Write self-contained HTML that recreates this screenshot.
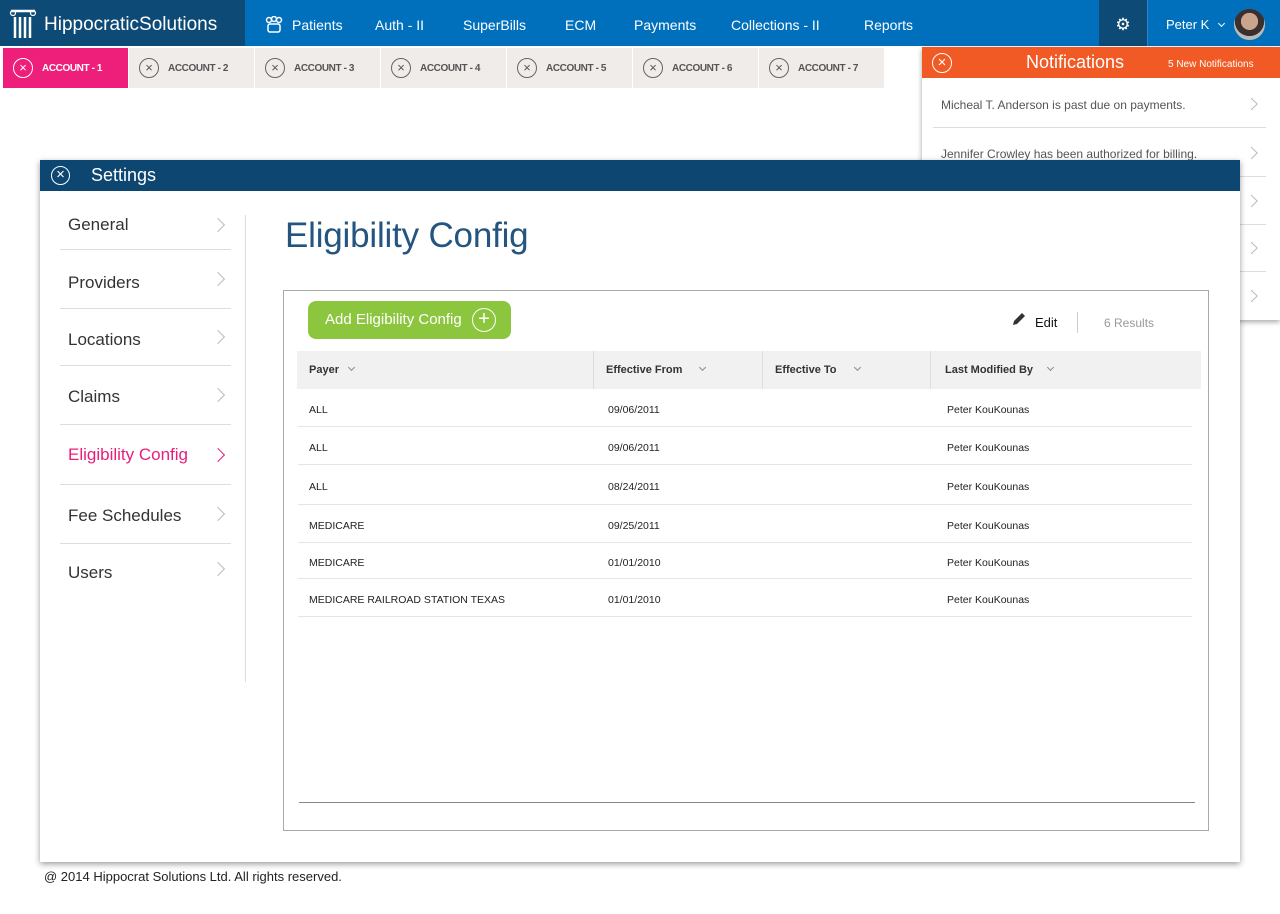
<!DOCTYPE html>
<html><head><meta charset="utf-8"><style>
*{box-sizing:border-box;margin:0;padding:0}
body{width:1280px;height:914px;background:#fff;font-family:"Liberation Sans",Arial,sans-serif;position:relative;overflow:hidden;color:#222}
.abs{position:absolute}
.nav{left:0;top:0;width:1280px;height:46px;background:#0070bd}
.logo{left:0;top:0;width:245px;height:46px;background:#0d4a75;color:#fff;font-size:19px;line-height:50px;padding-left:44px}
.nl{top:0;line-height:50px;color:#fff;font-size:14px}
.tab{top:48px;height:40px;width:125px;background:#efecea;color:#555;font-size:10px;line-height:41px;padding-left:39px;font-weight:bold;letter-spacing:-.4px}
.tab .x{position:absolute;left:10px;top:10px;width:20px;height:20px;border:1px solid #666;border-radius:50%;font-size:13px;line-height:17px;text-align:center;padding:0;font-weight:normal;letter-spacing:0}
.notif{left:922px;top:47px;width:358px;height:273px;background:#fff;box-shadow:0 2px 5px rgba(0,0,0,.35)}
.nh{height:31px;background:#f15a24;color:#fff}
.nrow{position:absolute;left:11px;width:333px;height:48px;border-bottom:1px solid #ddd;font-size:12px;color:#555;line-height:50px;padding-left:8px}
.chev{position:absolute;right:10px;top:50%;width:9px;height:9px;border-right:1px solid #bbb;border-top:1px solid #bbb;transform:translateY(-50%) rotate(45deg)}
.modal{left:40px;top:160px;width:1200px;height:702px;background:#fff;box-shadow:0 2px 6px rgba(0,0,0,.4)}
.mh{height:31px;background:#0d4670;color:#fff;font-size:18px;line-height:31px;padding-left:51px}
.si{position:absolute;left:20px;width:171px;font-size:17px;color:#333;padding-left:8px;border-bottom:1px solid #ddd}
.si .chev{right:8px;width:10px;height:10px}
.tbl{left:243px;top:130px;width:926px;height:541px;border:1px solid #aaa}
.th{position:absolute;top:60px;height:38px;background:#f1f1f1;font-size:11px;font-weight:bold;line-height:38px;padding-left:12px;color:#333}
.dd{display:inline-block;width:5px;height:5px;border-right:1px solid #888;border-bottom:1px solid #888;transform:rotate(45deg);margin-left:10px;position:relative;top:-3px}
.row{position:absolute;left:14px;width:894px;border-bottom:1px solid #e5e5e5;font-size:10.5px;color:#222}
.row span{position:absolute;top:50%;transform:translateY(-35%)}
</style></head><body>
<div class="abs nav"></div>
<div class="abs logo">Hippocratic<b style="font-weight:normal">Solutions</b>
<svg class="abs" style="left:9px;top:8px" width="28" height="32" viewBox="0 0 28 32"><path d="M2 3h24" stroke="#fff" stroke-width="2.5"/><circle cx="4" cy="5" r="2.5" fill="none" stroke="#fff" stroke-width="1.2"/><circle cx="24" cy="5" r="2.5" fill="none" stroke="#fff" stroke-width="1.2"/><path d="M6 9v21M11 9v21M16 9v21M21 9v21" stroke="#fff" stroke-width="2.5"/></svg></div>
<svg class="abs" style="left:265px;top:16px" width="18" height="17" viewBox="0 0 18 17"><g fill="none" stroke="#fff" stroke-width="1.5"><circle cx="4" cy="4" r="2.5"/><circle cx="9" cy="3" r="2.5"/><circle cx="14" cy="4" r="2.5"/><rect x="3" y="8" width="12" height="8" rx="2"/></g></svg>
<div class="abs nl" style="left:292px">Patients</div>
<div class="abs nl" style="left:375px">Auth - II</div>
<div class="abs nl" style="left:463px">SuperBills</div>
<div class="abs nl" style="left:565px">ECM</div>
<div class="abs nl" style="left:634px">Payments</div>
<div class="abs nl" style="left:731px">Collections - II</div>
<div class="abs nl" style="left:864px">Reports</div>
<div class="abs" style="left:1099px;top:0;width:48px;height:46px;background:#0d4a75;color:#fff;text-align:center;line-height:50px;font-size:17px">⚙</div>
<div class="abs" style="left:1147px;top:0;width:1px;height:46px;background:#2a84c8"></div>
<div class="abs nl" style="left:1166px;font-size:13px;line-height:50px">Peter K <span style="display:inline-block;width:5px;height:5px;border-right:1.3px solid #fff;border-bottom:1.3px solid #fff;transform:rotate(45deg);margin-left:6px;position:relative;top:-3px"></span></div>
<div class="abs" style="left:1234px;top:9px;width:31px;height:31px;border-radius:50%;background:radial-gradient(circle at 50% 40%,#c9a58d 0 35%,#3a3030 36% 60%,#b8bcb6 61%)"></div>

<div class="abs tab" style="left:3px;background:#ee1f7a;color:#fff"><span class="x" style="border-color:#fff;color:#fff">×</span>ACCOUNT - 1</div>
<div class="abs tab" style="left:129px"><span class="x">×</span>ACCOUNT - 2</div>
<div class="abs tab" style="left:255px"><span class="x">×</span>ACCOUNT - 3</div>
<div class="abs tab" style="left:381px"><span class="x">×</span>ACCOUNT - 4</div>
<div class="abs tab" style="left:507px"><span class="x">×</span>ACCOUNT - 5</div>
<div class="abs tab" style="left:633px"><span class="x">×</span>ACCOUNT - 6</div>
<div class="abs tab" style="left:759px"><span class="x">×</span>ACCOUNT - 7</div>

<div class="abs notif">
<div class="nh"><span class="abs" style="left:10px;top:6px;width:20px;height:20px;border:1.3px solid #fff;border-radius:50%;text-align:center;line-height:17px;font-size:15px">×</span>
<span class="abs" style="left:104px;top:5px;font-size:18px">Notifications</span>
<span class="abs" style="left:246px;top:12px;font-size:10px">5 New Notifications</span></div>
<div class="nrow" style="top:33px">Micheal T. Anderson is past due on payments.<i class="chev"></i></div>
<div class="nrow" style="top:82px">Jennifer Crowley has been authorized for billing.<i class="chev"></i></div>
<div class="nrow" style="top:130px"><i class="chev"></i></div>
<div class="nrow" style="top:177px"><i class="chev"></i></div>
<div class="nrow" style="top:225px;border:none"><i class="chev"></i></div>
</div>

<div class="abs modal">
<div class="mh"><span class="abs" style="left:11px;top:6px;width:19px;height:19px;border:1.3px solid #fff;border-radius:50%;text-align:center;line-height:16px;font-size:15px;padding:0">×</span>Settings</div>
<div class="si" style="top:40px;height:50px;line-height:50px">General<i class="chev"></i></div>
<div class="si" style="top:90px;height:59px;line-height:66px">Providers<i class="chev"></i></div>
<div class="si" style="top:149px;height:57px;line-height:62px">Locations<i class="chev"></i></div>
<div class="si" style="top:206px;height:59px;line-height:62px">Claims<i class="chev"></i></div>
<div class="si" style="top:265px;height:60px;line-height:60px;color:#e91e7a">Eligibility Config<i class="chev" style="border-color:#e91e7a;border-width:1.5px"></i></div>
<div class="si" style="top:325px;height:59px;line-height:62px">Fee Schedules<i class="chev"></i></div>
<div class="si" style="top:384px;height:50px;line-height:58px;border:none">Users<i class="chev"></i></div>
<div class="abs" style="left:205px;top:55px;width:1px;height:467px;background:#ddd"></div>
<div class="abs" style="left:245px;top:56px;font-size:35px;color:#23557f;letter-spacing:-.2px">Eligibility Config</div>
<div class="abs tbl">
<div class="abs" style="left:24px;top:10px;width:203px;height:38px;background:#8cc63f;border-radius:8px;color:#fff;font-size:15px;line-height:38px;padding-left:17px">Add Eligibility Config<span class="abs" style="left:164px;top:7px;width:24px;height:24px;border:1px solid #fff;border-radius:50%;text-align:center;line-height:21px;font-size:20px">+</span></div>
<svg class="abs" style="left:727px;top:20px" width="16" height="16" viewBox="0 0 16 16"><path d="M2 14l1-4 8-8 3 3-8 8z" fill="#333"/></svg>
<div class="abs" style="left:751px;top:24px;font-size:13px;color:#111">Edit</div>
<div class="abs" style="left:793px;top:21px;width:1px;height:21px;background:#ccc"></div>
<div class="abs" style="left:820px;top:25px;font-size:12px;color:#999">6 Results</div>
<div class="th" style="left:13px;width:296px">Payer<i class="dd"></i></div>
<div class="th" style="left:310px;width:168px">Effective From<i class="dd" style="margin-left:18px"></i></div>
<div class="th" style="left:479px;width:167px">Effective To<i class="dd" style="margin-left:18px"></i></div>
<div class="th" style="left:647px;width:270px;padding-left:14px">Last Modified By<i class="dd" style="margin-left:15px"></i></div>
<div class="abs" style="left:309px;top:60px;width:1px;height:38px;background:#ddd"></div>
<div class="abs" style="left:478px;top:60px;width:1px;height:38px;background:#ddd"></div>
<div class="abs" style="left:646px;top:60px;width:1px;height:38px;background:#ddd"></div>
<div class="row" style="top:98px;height:38px"><span style="left:11px">ALL</span><span style="left:310px">09/06/2011</span><span style="left:649px">Peter KouKounas</span></div>
<div class="row" style="top:136px;height:38px"><span style="left:11px">ALL</span><span style="left:310px">09/06/2011</span><span style="left:649px">Peter KouKounas</span></div>
<div class="row" style="top:174px;height:40px"><span style="left:11px">ALL</span><span style="left:310px">08/24/2011</span><span style="left:649px">Peter KouKounas</span></div>
<div class="row" style="top:214px;height:38px"><span style="left:11px">MEDICARE</span><span style="left:310px">09/25/2011</span><span style="left:649px">Peter KouKounas</span></div>
<div class="row" style="top:252px;height:36px"><span style="left:11px">MEDICARE</span><span style="left:310px">01/01/2010</span><span style="left:649px">Peter KouKounas</span></div>
<div class="row" style="top:288px;height:38px"><span style="left:11px">MEDICARE RAILROAD STATION TEXAS</span><span style="left:310px">01/01/2010</span><span style="left:649px">Peter KouKounas</span></div>
<div class="abs" style="left:15px;top:511px;width:896px;height:1px;background:#888"></div>
</div>
</div>
<div class="abs" style="left:44px;top:869px;font-size:13px;color:#222">@ 2014 Hippocrat Solutions Ltd. All rights reserved.</div>
</body></html>
